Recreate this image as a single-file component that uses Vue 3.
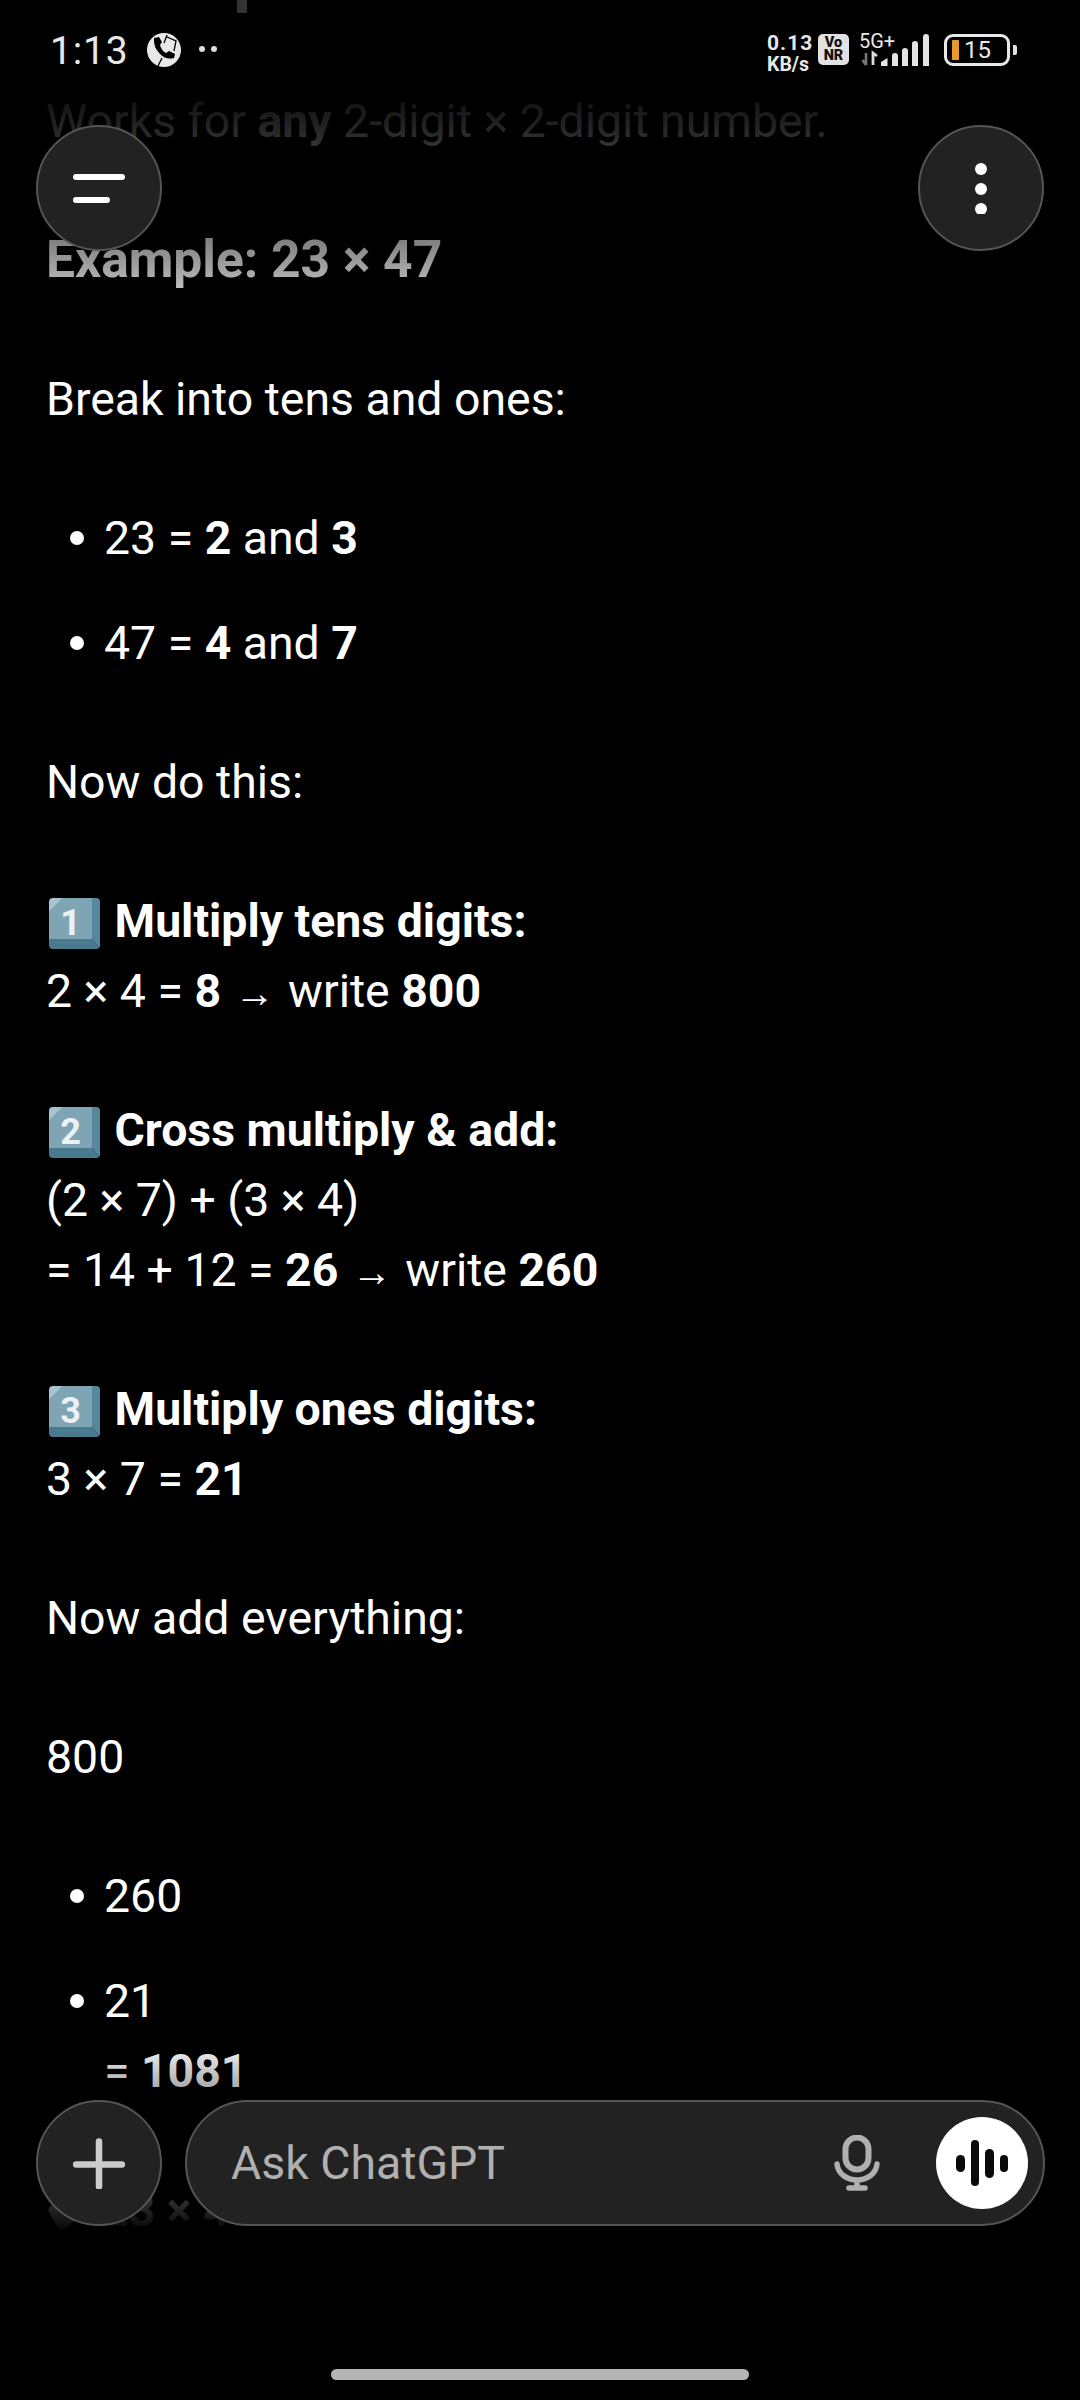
<script setup>
const keycap = (n) => n
</script>

<template>
  <div class="screen">
    <main class="chat">
      <p>Works for <b>any</b> 2-digit × 2-digit number.</p>
      <p class="heading"><b>Example: 23 × 47</b></p>
      <p>Break into tens and ones:</p>
      <ul>
        <li>23 = <b>2</b> and <b>3</b></li>
        <li>47 = <b>4</b> and <b>7</b></li>
      </ul>
      <p>Now do this:</p>
      <p>
        <span class="key">{{ keycap(1) }}</span> <b>Multiply tens digits:</b><br />
        2 × 4 = <b>8</b> <span class="arrow">→</span> write <b>800</b>
      </p>
      <p>
        <span class="key">{{ keycap(2) }}</span> <b>Cross multiply &amp; add:</b><br />
        (2 × 7) + (3 × 4)<br />
        = 14 + 12 = <b>26</b> <span class="arrow">→</span> write <b>260</b>
      </p>
      <p>
        <span class="key">{{ keycap(3) }}</span> <b>Multiply ones digits:</b><br />
        3 × 7 = <b>21</b>
      </p>
      <p>Now add everything:</p>
      <p>800</p>
      <ul>
        <li>260</li>
        <li>21<br />= <b>1081</b></li>
      </ul>
      <p class="answer">
        <svg class="check" viewBox="0 0 40 30" width="40" height="30">
          <path d="M6 8l8 14L32 7" fill="none" stroke="#fff" stroke-width="11" stroke-linejoin="round" stroke-linecap="round" />
        </svg>
        <b>23 × 47 = 1081</b>
      </p>
    </main>

    <div class="fade-top"></div>
    <div class="fade-bottom"></div>
    <div class="scrap"></div>

    <header class="status">
      <div class="status-left">
        <span class="time">1:13</span>
        <svg class="app-icon" viewBox="0 0 34 34" width="34" height="34">
          <circle cx="17" cy="17" r="17" fill="#e8e8e8" />
          <path d="M7 5Q6 14 13 21Q19 27 27 25L28 21L22 18L19 20Q14 17 13 12L15 9L12 4Z" fill="#000" />
          <path d="M17 10L20 2M20 4L29 8L27 18M11 33L15 25" fill="none" stroke="#000" stroke-width="1.3" />
        </svg>
        <span class="dots"><i></i><i></i></span>
      </div>
      <div class="status-right">
        <span class="speed"><span>0.13</span><span>KB/s</span></span>
        <span class="vonr"><span>Vo</span><span>NR</span></span>
        <span class="net">
          <span class="net-label">5G+</span>
          <svg viewBox="0 0 72 34" width="72" height="34" class="signal">
            <path d="M7 21v12M3.500 28l3.500 5" fill="none" stroke="#777" stroke-width="2.600" />
            <path d="M14 33v-12l4 3" fill="none" stroke="#ddd" stroke-width="2.800" />
            <path d="M22 34v-4l6.500-4v8zM33 34v-10q0-3 3-3t3 3v10zM43 34v-15q0-3 3-3t3 3v15zM53 34v-22q0-3 3-3t3 3v22z" fill="#e4e4e4" />
            <path d="M64 34v-29q0-3 3-3t3 3v29z" fill="#e4e4e4" />
          </svg>
        </span>
        <span class="battery-wrap">
          <span class="battery"><i class="level"></i><span>15</span></span>
          <i class="nub"></i>
        </span>
      </div>
    </header>

    <button class="round menu" aria-label="Menu">
      <svg viewBox="0 0 52 30" width="52" height="30">
        <path d="M3 4h46M3 27h31" stroke="#fff" stroke-width="6" stroke-linecap="round" fill="none" />
      </svg>
    </button>
    <button class="round more" aria-label="More">
      <svg viewBox="0 -1 12 52" width="12" height="52">
        <circle cx="6" cy="6" r="6" fill="#fff" /><circle cx="6" cy="26" r="6" fill="#fff" /><circle cx="6" cy="46" r="6" fill="#fff" />
      </svg>
    </button>

    <footer class="composer">
      <button class="round plus" aria-label="Add">
        <svg viewBox="0 -1.500 52 52" width="52" height="52">
          <path d="M26 3v45M3 26h46" stroke="#ccc" stroke-width="6.500" stroke-linecap="round" fill="none" />
        </svg>
      </button>
      <div class="input">
        <span class="placeholder">Ask ChatGPT</span>
        <svg class="mic" viewBox="0 0 46 56" width="46" height="56">
          <rect x="11.500" y="2.500" width="23" height="32" rx="11.500" fill="none" stroke="#b0b0b0" stroke-width="6" />
          <path d="M3 29c1 10 10 16 20 16s19-6 20-16M23 45v8M15 53h16" fill="none" stroke="#b0b0b0" stroke-width="5.500" stroke-linecap="round" />
        </svg>
        <span class="voice">
          <i class="b1"></i><i class="b2"></i><i class="b3"></i><i class="b1"></i>
        </span>
      </div>
    </footer>

    <div class="home"></div>
  </div>
</template>

<style scoped>
.screen {
  position: relative;
  width: 1080px;
  height: 2400px;
  overflow: hidden;
  background: #000;
  color: #fff;
  font-family: Roboto, "Noto Sans", sans-serif;
}
.chat {
  display: flex;
  flex-direction: column;
  gap: 69px;
  padding: 86px 46px 0;
  font-size: 46.4px;
  line-height: 70px;
}
p, ul { margin: 0; padding: 0; }
b { font-weight: 700; }
.heading { font-size: 51.5px; }
ul {
  display: flex;
  flex-direction: column;
  gap: 35px;
  list-style: none;
}
li { position: relative; padding-left: 58px; }
li::before {
  content: "";
  position: absolute;
  left: 24px;
  top: 28px;
  width: 14px;
  height: 14px;
  border-radius: 50%;
  background: #fff;
}
.key {
  display: inline-flex;
  align-items: center;
  justify-content: center;
  width: 51px;
  height: 51px;
  margin: 0 3px 0 3px;
  padding-top: 10px;
  vertical-align: 2px;
  border-radius: 4px;
  background: linear-gradient(135deg, #a5c3d0 0, #a5c3d0 9px, #7fa5b5 10px, #7fa5b5 100%);
  border-right: 8px solid #56879b;
  border-bottom: 10px solid #4a7a8e;
  box-sizing: border-box;
  font-size: 36px;
  font-weight: 700;
  line-height: 1;
  color: #eaf2f5;
}
.arrow {
  font-family: "Liberation Sans", sans-serif;
  font-size: 40px;
  font-weight: 400;
  line-height: 1;
  margin: 0 2px;
}
.check {
  display: inline-block;
  margin: 0 14px 0 2px;
  vertical-align: -6px;
}
.fade-top {
  position: absolute;
  inset: 0 0 auto 0;
  height: 330px;
  background: linear-gradient(#000 0, #000 70px, rgba(0,0,0,.88) 121px, rgba(0,0,0,.5) 240px, rgba(0,0,0,.3) 280px, rgba(0,0,0,0) 330px);
}
.fade-bottom {
  position: absolute;
  left: 0;
  right: 0;
  top: 2040px;
  bottom: 0;
  background: linear-gradient(rgba(0,0,0,0) 0, rgba(0,0,0,.35) 50px, rgba(0,0,0,.84) 165px, #000 195px, #000 100%);
}
.scrap {
  position: absolute;
  left: 237px;
  top: 0;
  width: 10px;
  height: 13px;
  background: #333;
}
.status {
  position: absolute;
  top: 30px;
  left: 50px;
  right: 63px;
  height: 38px;
  display: flex;
  justify-content: space-between;
  align-items: center;
  color: #e8e8e8;
}
.status-left { display: flex; align-items: center; }
.time { font-size: 39px; line-height: 38px; width: 97px; letter-spacing: .8px; padding-top: 4px; }
.app-icon { margin: 2px 18px 0 0; }
.dots { display: flex; gap: 6px; }
.dots i { width: 6px; height: 6px; border-radius: 50%; background: #ddd; }
.status-right { display: flex; align-items: center; }
.speed {
  display: flex;
  flex-direction: column;
  align-items: flex-start;
  width: 51px;
  padding-top: 9px;
  font-size: 19.500px;
  line-height: 22px;
  font-weight: 700;
}
.speed span:first-child { font-size: 21px; letter-spacing: 1px; }
.vonr {
  display: flex;
  flex-direction: column;
  align-items: center;
  justify-content: center;
  width: 31px;
  height: 31px;
  border-radius: 5px;
  background: #e2e2e2;
  color: #111;
  font-size: 14.500px;
  line-height: 13.500px;
  font-weight: 900;
}
.net { position: relative; display: block; width: 72px; height: 34px; margin-left: 10px; }
.net-label {
  position: absolute;
  left: 0;
  top: -1px;
  font-size: 20px;
  line-height: 20px;
}
.signal { position: absolute; left: 0; top: 0; }
.battery-wrap { display: flex; align-items: center; margin-left: 13px; margin-top: 1px; }
.battery {
  display: flex;
  align-items: center;
  box-sizing: border-box;
  width: 66px;
  height: 32px;
  border: 3px solid #e8e8e8;
  border-radius: 9px;
  padding-left: 5px;
  font-size: 24px;
  line-height: 24px;
}
.level { width: 7px; height: 20px; background: #e69a2a; border-radius: 1px; margin-right: 5px; }
.nub { width: 4px; height: 10px; margin-left: 3px; background: #e0e0e0; border-radius: 0 2px 2px 0; }
.round {
  display: flex;
  align-items: center;
  justify-content: center;
  box-sizing: border-box;
  width: 126px;
  height: 126px;
  padding: 0;
  border: 2px solid #555;
  border-radius: 50%;
  background: #222;
}
.menu { position: absolute; left: 36px; top: 125px; }
.more { position: absolute; left: 918px; top: 125px; }
.composer {
  position: absolute;
  left: 36px;
  right: 35px;
  top: 2100px;
  display: flex;
  gap: 23px;
}
.plus { flex: none; }
.input {
  flex: 1;
  display: flex;
  align-items: center;
  box-sizing: border-box;
  height: 126px;
  padding: 0 15px 0 44px;
  border: 2px solid #555;
  border-radius: 63px;
  background: #222;
}
.placeholder { flex: 1; font-size: 46.4px; color: #b0b0b0; }
.mic { margin-right: 56px; }
.voice {
  display: flex;
  align-items: center;
  justify-content: center;
  gap: 6px;
  width: 92px;
  height: 92px;
  border-radius: 50%;
  background: #fff;
}
.voice i { display: block; width: 8.500px; background: #0a0a0a; border-radius: 5px; }
.b1 { height: 17px; }
.b2 { height: 46px; }
.b3 { height: 29px; }
.home {
  position: absolute;
  left: 331px;
  top: 2369px;
  width: 418px;
  height: 11px;
  border-radius: 6px;
  background: #b5b5b5;
}
</style>
